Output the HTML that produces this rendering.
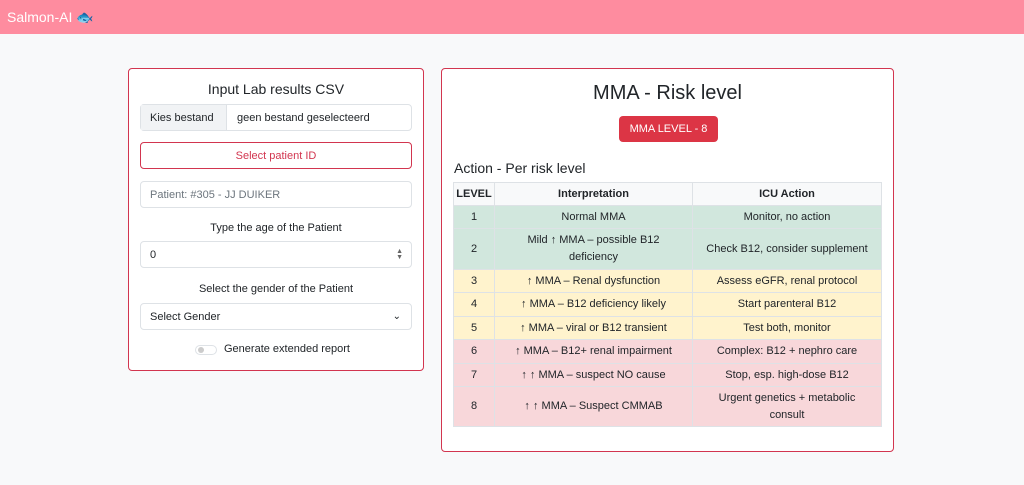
<!DOCTYPE html>
<html><head><meta charset="utf-8"><style>
*{box-sizing:border-box;margin:0;padding:0}
body{width:1024px;height:485px;background:#f8f9fa;font-family:"Liberation Sans",sans-serif;color:#212529;position:relative;overflow:hidden}
.nav{position:absolute;left:0;top:0;width:1024px;height:34px;background:#fe8c9f;color:#fff;font-size:14px;line-height:34px;padding-left:7px}
.card{position:absolute;background:#fff;border:1px solid #d2354f;border-radius:4px}
.abs{position:absolute}
.ctl{position:absolute;left:11px;width:272px;height:27px;border:1px solid #dee2e6;border-radius:4px;font-size:11px;line-height:26px;padding-left:9px;background:#fff}
.lbl{position:absolute;left:0;width:294px;text-align:center;font-size:11px}
table{position:absolute;left:11px;top:113px;width:429px;border-collapse:collapse;font-size:11px;text-align:center;table-layout:fixed}
td,th{border:1px solid #dee2e6;padding:0 12px;line-height:17px}
td:first-child,th:first-child{padding:0 2px}
th{background:#f8f9fa;height:23px}
.g td{background:#d1e7dd}.y td{background:#fff3cd}.r td{background:#f8d7da}
</style></head><body>
<div class="nav">Salmon-AI 🐟</div>
<div class="card" style="left:128px;top:68px;width:296px;height:303px">
 <div class="lbl" style="top:12px;font-size:14px">Input Lab results CSV</div>
 <div class="ctl" style="top:35px;padding:0;display:flex"><span style="background:#f1f3f5;border-right:1px solid #dee2e6;padding:0 9px;width:86px">Kies bestand</span><span style="padding-left:10px">geen bestand geselecteerd</span></div>
 <div class="ctl" style="top:73px;border-color:#d2354f;color:#d2354f;text-align:center;padding:0">Select patient ID</div>
 <div class="ctl" style="top:112px;color:#6c757d">Patient: #305 - JJ DUIKER</div>
 <div class="lbl" style="top:153px">Type the age of the Patient</div>
 <div class="ctl" style="top:172px">0<span style="position:absolute;right:8px;font-size:7px;line-height:6px;top:7px;color:#666">▲<br>▼</span></div>
 <div class="lbl" style="top:214px">Select the gender of the Patient</div>
 <div class="ctl" style="top:234px">Select Gender<span style="position:absolute;right:10px;top:0;font-size:10px">⌄</span></div>
 <div class="abs" style="left:66px;top:276px;width:22px;height:10px;border:1px solid #dee2e6;border-radius:6px"><div style="width:6px;height:6px;border-radius:50%;background:#ccc;margin:1px 2px"></div></div>
 <div class="abs" style="left:95px;top:274px;font-size:11px">Generate extended report</div>
</div>
<div class="card" style="left:441px;top:68px;width:453px;height:384px">
 <div class="abs" style="left:0;width:451px;text-align:center;top:13px;font-size:20px">MMA - Risk level</div>
 <div class="abs" style="left:177px;top:47px;width:99px;height:26px;background:#dc3545;color:#fff;border-radius:4px;font-size:11px;line-height:26px;text-align:center">MMA LEVEL - 8</div>
 <div class="abs" style="left:12px;top:91px;font-size:14px">Action - Per risk level</div>
 <table>
  <colgroup><col style="width:41px"><col style="width:198px"><col></colgroup>
  <tr><th>LEVEL</th><th>Interpretation</th><th>ICU Action</th></tr>
  <tr class="g" style="height:23px"><td>1</td><td>Normal MMA</td><td>Monitor, no action</td></tr>
  <tr class="g" style="height:41px"><td>2</td><td>Mild ↑ MMA – possible B12 deficiency</td><td>Check B12, consider supplement</td></tr>
  <tr class="y" style="height:23px"><td>3</td><td>↑ MMA – Renal dysfunction</td><td>Assess eGFR, renal protocol</td></tr>
  <tr class="y" style="height:24px"><td>4</td><td>↑ MMA – B12 deficiency likely</td><td>Start parenteral B12</td></tr>
  <tr class="y" style="height:23px"><td>5</td><td>↑ MMA – viral or B12 transient</td><td>Test both, monitor</td></tr>
  <tr class="r" style="height:24px"><td>6</td><td>↑ MMA – B12+ renal impairment</td><td>Complex: B12 + nephro care</td></tr>
  <tr class="r" style="height:23px"><td>7</td><td>↑ ↑ MMA – suspect NO cause</td><td>Stop, esp. high-dose B12</td></tr>
  <tr class="r" style="height:40px"><td>8</td><td>↑ ↑ MMA – Suspect CMMAB</td><td>Urgent genetics + metabolic consult</td></tr>
 </table>
</div>
</body></html>
